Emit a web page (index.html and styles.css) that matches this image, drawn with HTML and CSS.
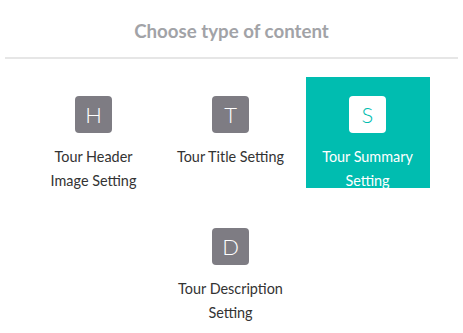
FILE: index.html
```html
<!DOCTYPE html>
<html>
<head>
<meta charset="utf-8">
<link rel="stylesheet" href="styles.css">
</head>
<body>
<div class="panel">
  <h1 class="title">Choose type of content</h1>
  <div class="grid">
    <div class="item"><span class="icon">H</span><span class="label">Tour Header Image Setting</span></div>
    <div class="item"><span class="icon">T</span><span class="label">Tour Title Setting</span></div>
    <div class="item active"><span class="icon">S</span><span class="label">Tour Summary Setting</span></div>
    <div class="item"><span class="icon">D</span><span class="label">Tour Description Setting</span></div>
  </div>
</div>
</body>
</html>
```
FILE: styles.css
```css
html, body {
  margin: 0;
  padding: 0;
  background: #ffffff;
}
body {
  font-family: Lato, "Noto Sans", sans-serif;
  overflow: hidden;
}
.panel {
  width: 463px;
  height: 333px;
}
.title {
  margin: 0 5px;
  height: 59px;
  box-sizing: border-box;
  border-bottom: 2px solid #e6e6e6;
  display: flex;
  align-items: center;
  justify-content: center;
  font-size: 18.7px;
  font-weight: 700;
  color: #a2a3a7;
  padding-top: 4px;
}
.grid {
  display: flex;
  flex-wrap: wrap;
  justify-content: center;
  column-gap: 13px;
  row-gap: 21px;
  padding: 18px 0 0 0;
  margin-left: -2px;
}
.item {
  width: 124px;
  height: 111px;
  box-sizing: border-box;
  padding-top: 19px;
  display: flex;
  flex-direction: column;
  align-items: center;
  text-align: center;
  color: #333333;
}
.icon {
  width: 37px;
  height: 37px;
  border-radius: 4px;
  background: #7e7c83;
  color: #ffffff;
  font-size: 22px;
  font-weight: 300;
  line-height: 37px;
  text-align: center;
  flex: none;
}
.label {
  margin-top: 12px;
  font-size: 14.4px;
  line-height: 24px;
  padding: 0 6px;
}
.item.active {
  background: #00bdb0;
  color: #ffffff;
}
.item.active .icon {
  background: #ffffff;
  color: #00bdb0;
}
```
